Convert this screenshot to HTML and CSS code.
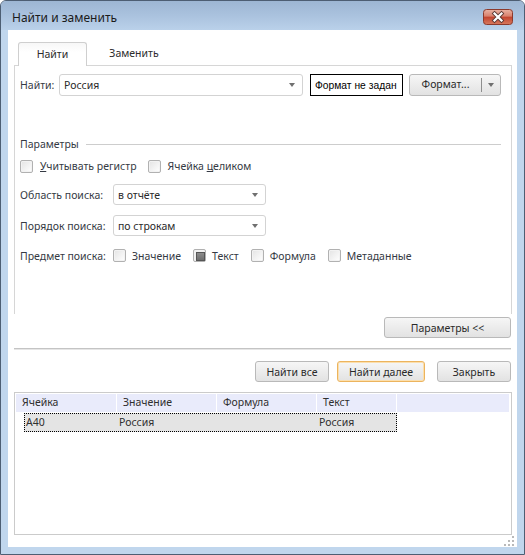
FILE: index.html
```html
<!DOCTYPE html>
<html lang="ru">
<head>
<meta charset="utf-8">
<title>Найти и заменить</title>
<link rel="stylesheet" href="styles.css">
</head>
<body>
<div class="window">
  <div class="titlebar">
    <span class="title">Найти и заменить</span>
    <div class="close-btn">
      <svg width="30" height="16" viewBox="0 0 30 16">
        <defs>
          <linearGradient id="cg" x1="0" y1="0" x2="0" y2="1">
            <stop offset="0" stop-color="#e9b3a4"/>
            <stop offset="0.45" stop-color="#d9806c"/>
            <stop offset="0.5" stop-color="#c2432e"/>
            <stop offset="1" stop-color="#d77a5f"/>
          </linearGradient>
        </defs>
        <rect x="0.5" y="0.5" width="29" height="15" rx="3" fill="url(#cg)" stroke="#8c3a2c"/>
        <path d="M11.5 4.5 L18.5 11.5 M18.5 4.5 L11.5 11.5" stroke="#5a3a36" stroke-width="4" stroke-linecap="square"/>
        <path d="M11.5 4.5 L18.5 11.5 M18.5 4.5 L11.5 11.5" stroke="#ffffff" stroke-width="2.2" stroke-linecap="square"/>
      </svg>
    </div>
  </div>
  <div class="client">
    <div class="tabs">
      <div class="tab tab-active">Найти</div>
      <div class="tab">Заменить</div>
    </div>
    <div class="panel">
      <div class="find-row">
        <span class="find-label">Найти:</span>
        <div class="combo combo-find"><span>Россия</span><i class="arrow"></i></div>
        <div class="format-box">Формат не задан</div>
        <div class="btn split-btn">
          <span class="split-main">Формат...</span>
          <span class="split-side"><i class="arrow"></i></span>
        </div>
      </div>

      <div class="group-header">
        <span>Параметры</span>
        <div class="group-line"></div>
      </div>

      <div class="check-row first-checks">
        <span class="check"><i class="box"></i><span><u>У</u>читывать регистр</span></span>
        <span class="check"><i class="box"></i><span>Ячейка <u>ц</u>еликом</span></span>
      </div>

      <div class="field-row row-area">
        <span class="field-label">Область поиска:</span>
        <div class="combo combo-small"><span>в отчёте</span><i class="arrow"></i></div>
      </div>

      <div class="field-row row-order">
        <span class="field-label">Порядок поиска:</span>
        <div class="combo combo-small"><span>по строкам</span><i class="arrow"></i></div>
      </div>

      <div class="field-row row-subject">
        <span class="field-label">Предмет поиска:</span>
        <div class="check-row subject-checks">
          <span class="check"><i class="box"></i><span>Значение</span></span>
          <span class="check"><i class="box box-filled"></i><span>Текст</span></span>
          <span class="check"><i class="box"></i><span>Формула</span></span>
          <span class="check"><i class="box"></i><span>Метаданные</span></span>
        </div>
      </div>
    </div>

    <div class="params-row">
      <div class="btn btn-params">Параметры &lt;&lt;</div>
    </div>

    <div class="separator"></div>

    <div class="actions">
      <div class="btn btn-findall">Найти все</div>
      <div class="btn btn-next">Найти далее</div>
      <div class="btn btn-close">Закрыть</div>
    </div>

    <div class="results">
      <div class="results-head">
        <div class="hcell c1">Ячейка</div>
        <div class="hcell c2">Значение</div>
        <div class="hcell c3">Формула</div>
        <div class="hcell c4">Текст</div>
        <div class="hcell c5"></div>
      </div>
      <div class="results-row">
        <div class="dcell d1">A40</div>
        <div class="dcell d2">Россия</div>
        <div class="dcell d3"></div>
        <div class="dcell d4">Россия</div>
      </div>
    </div>

    <svg class="grip" width="10" height="10" viewBox="0 0 10 10">
      <g fill="#b9b9b9">
        <rect x="8" y="0" width="2" height="2"/>
        <rect x="4" y="4" width="2" height="2"/>
        <rect x="8" y="4" width="2" height="2"/>
        <rect x="0" y="8" width="2" height="2"/>
        <rect x="4" y="8" width="2" height="2"/>
        <rect x="8" y="8" width="2" height="2"/>
      </g>
    </svg>
  </div>
</div>
</body>
</html>
```

FILE: styles.css
```css
* {
  box-sizing: border-box;
}

html, body {
  margin: 0;
  padding: 0;
  background: #ffffff;
}

body {
  font-family: "Noto Sans", "DejaVu Sans", sans-serif;
  font-size: 10.5px;
  color: #353a44;
}

.window {
  width: 525px;
  height: 555px;
  border: 1px solid #4d5e73;
  border-radius: 6px 6px 0 0;
  background: #c0d6ed;
  padding: 0 7px 7px 7px;
  display: flex;
  flex-direction: column;
}

.titlebar {
  height: 29px;
  margin: 0 -7px;
  padding: 0 11px 0 11px;
  display: flex;
  align-items: center;
  justify-content: space-between;
  background: linear-gradient(to bottom, #9db6d3 0%, #aac2de 50%, #bad1ea 100%);
  border-radius: 5px 5px 0 0;
}

.title {
  font-family: "Noto Sans", sans-serif;
  font-size: 12px;
  color: #1b1b1b;
  padding-top: 3px;
}

.close-btn {
  width: 30px;
  height: 16px;
  margin-top: 3px;
  display: flex;
}

.client {
  position: relative;
  flex: 1;
  background: #ffffff;
  padding: 12px 5px 0 6px;
  display: flex;
  flex-direction: column;
}

/* Tabs */
.tabs {
  display: flex;
  align-items: flex-end;
  height: 23px;
  padding-left: 4px;
}

.tab {
  height: 23px;
  line-height: 22px;
  text-align: center;
  color: #2c2c2c;
}

.tab-active {
  width: 69px;
  height: 24px;
  margin-bottom: -1px;
  position: relative;
  z-index: 1;
  border: 1px solid #cfcfcf;
  border-bottom: none;
  border-radius: 3px 3px 0 0;
  background: linear-gradient(to bottom, #f7f7f7 0%, #ffffff 40%);
}

.tab:not(.tab-active) {
  width: 94px;
}

.panel {
  height: 249px;
  border: 1px solid #d6d6d6;
  border-bottom: none;
  padding: 8px 0 0 5px;
}

/* Find row */
.find-row {
  display: flex;
  align-items: center;
  height: 22px;
}

.find-label {
  width: 39px;
}

.combo {
  height: 22px;
  border: 1px solid #d3d3d3;
  border-radius: 3px;
  background: #ffffff;
  display: flex;
  align-items: center;
  justify-content: space-between;
  padding: 0 7px 0 4px;
  color: #2a2a2a;
}

.combo-find {
  width: 244px;
}

.arrow {
  display: block;
  width: 0;
  height: 0;
  border-left: 3.5px solid transparent;
  border-right: 3.5px solid transparent;
  border-top: 4px solid #707070;
}

.format-box {
  width: 93px;
  height: 22px;
  margin-left: 7px;
  border: 1px solid #000000;
  display: flex;
  align-items: center;
  padding-left: 4px;
  font-family: "Liberation Sans", Arial, sans-serif;
  font-size: 10.3px;
  color: #000000;
  white-space: nowrap;
  overflow: hidden;
}

.btn {
  height: 21px;
  border: 1px solid #b9b9b9;
  border-radius: 3px;
  background: linear-gradient(to bottom, #f6f6f6 0%, #ececec 50%, #e2e2e2 100%);
  display: flex;
  align-items: center;
  justify-content: center;
  color: #2a2a2a;
  white-space: nowrap;
}

.split-btn {
  width: 92px;
  height: 22px;
  margin-left: 6px;
  justify-content: flex-start;
}

.split-main {
  width: 72px;
  text-align: center;
  border-right: 1px solid #8e8e8e;
  height: 14px;
  line-height: 13px;
}

.split-side {
  flex: 1;
  display: flex;
  justify-content: center;
}

/* Group header */
.group-header {
  margin-top: 41px;
  height: 14px;
  display: flex;
  align-items: center;
  margin-right: 10px;
}

.group-line {
  flex: 1;
  height: 1px;
  background: #cdcdcd;
  margin-left: 7px;
}

/* Checkboxes */
.check-row {
  display: flex;
  align-items: center;
}

.first-checks {
  margin-top: 7px;
  height: 16px;
  gap: 11px;
}

.check {
  display: flex;
  align-items: center;
  gap: 7px;
}

.box {
  display: block;
  width: 13px;
  height: 13px;
  border: 1px solid #b1b1b1;
  border-radius: 2px;
  background: linear-gradient(to bottom right, #e3e3e3 0%, #f4f4f4 60%, #ffffff 100%);
  box-shadow: inset 0 0 0 1px #f2f2f2;
  position: relative;
}

.box-filled {
  background: #eaeaea;
  box-shadow: inset 0 0 0 2px #f1f1f1;
}

.box-filled::after {
  content: "";
  position: absolute;
  left: 2px;
  top: 2px;
  width: 7px;
  height: 7px;
  background: linear-gradient(to bottom, #8c8c8c, #6e6e6e);
  border: 1px solid #555555;
}

u {
  text-decoration: underline;
  text-underline-offset: 1px;
}

/* Field rows */
.field-row {
  display: flex;
  align-items: center;
  height: 21px;
}

.field-label {
  width: 93px;
}

.combo-small {
  width: 153px;
  height: 21px;
}

.row-area {
  margin-top: 10px;
}

.row-order {
  margin-top: 10px;
}

.row-subject {
  margin-top: 9px;
}

.subject-checks {
  gap: 12px;
}

.subject-checks .check {
  gap: 6px;
}

/* Params button */
.params-row {
  display: flex;
  justify-content: flex-end;
  margin-top: 3px;
  padding-right: 1px;
}

.btn-params {
  width: 127px;
}

.separator {
  margin-top: 10px;
  height: 2px;
  margin-right: 1px;
  border-top: 1px solid #c4c4c4;
  border-bottom: 1px solid #e6e6e6;
}

.actions {
  margin-top: 11px;
  display: flex;
  justify-content: flex-end;
  padding-right: 1px;
}

.btn-findall {
  width: 74px;
}

.btn-next {
  width: 88px;
  margin-left: 8px;
  border-color: #ecb45e;
  box-shadow: inset 0 0 0 1px #fbdfae;
}

.btn-close {
  width: 74px;
  margin-left: 12px;
}

/* Results */
.results {
  margin-top: 10px;
  height: 143px;
  border: 1px solid #cbcbcb;
  padding: 1px 2px 0 1px;
}

.results-head {
  display: flex;
  height: 18px;
  background: #e9ebfb;
  color: #2f2f2f;
}

.hcell {
  height: 18px;
  line-height: 17px;
  padding-left: 6px;
  border-right: 1px solid #ffffff;
  white-space: nowrap;
}

.c1 { width: 101px; }
.c2 { width: 100px; }
.c3 { width: 100px; }
.c4 { width: 80px; }
.c5 { flex: 1; border-right: none; }

.results-row {
  display: flex;
  margin-top: 1px;
  margin-left: 8px;
  width: 373px;
  height: 19px;
  background: #e4e4e4;
  border: 1px dotted #000000;
  color: #2f2f2f;
}

.dcell {
  line-height: 17px;
  padding-left: 1px;
  white-space: nowrap;
}

.d1 { width: 93px; }
.d2 { width: 100px; }
.d3 { width: 100px; }
.d4 { flex: 1; }

.grip {
  position: absolute;
  right: 3px;
  bottom: 1px;
}
```
